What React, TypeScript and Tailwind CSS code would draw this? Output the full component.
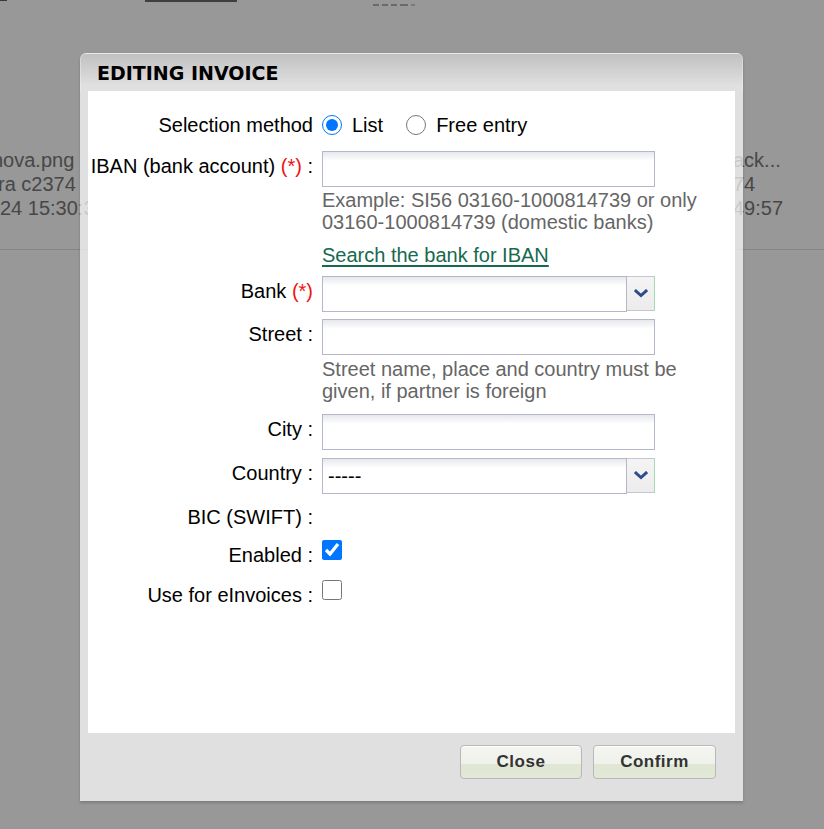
import React from "react";

const inputCls =
  "h-[36px] w-[333px] border border-[#b4b7c9] bg-[linear-gradient(to_bottom,#e6e8ec,#ffffff_9px)]";

function Chevron() {
  return (
    <svg width="14" height="9" viewBox="0 0 14 9">
      <path d="M2 2 L7 6.5 L12 2" fill="none" stroke="#2e4b8c" strokeWidth="3" strokeLinecap="square" />
    </svg>
  );
}

function Select({ value }: { value?: string }) {
  return (
    <div className="flex h-[36px] w-[333px]">
      <div className="flex-1 h-[36px] border border-[#b4b7c9] bg-[linear-gradient(to_bottom,#e6e8ec,#ffffff_9px)] flex items-center pl-[5px] text-[20px] leading-none text-black">
        {value}
      </div>
      <div className="w-[28px] h-[35px] border-t border-b border-r border-t-[#c4c6d0] border-b-[#c4c6d0] border-r-[#a6dbb0] bg-[linear-gradient(to_bottom,#f4f4f4,#ececec)] flex items-center justify-center">
        <Chevron />
      </div>
    </div>
  );
}

export default function App() {
  return (
    <div className="relative w-[824px] h-[829px] overflow-hidden bg-[#989898] font-['Liberation_Sans',Arial,sans-serif]">
      {/* background page */}
      <div className="flex h-[7px] items-start">
        <div className="w-[7px] h-[1px] bg-[#3a3a3a]" />
        <div className="ml-[138px] w-[92px] h-[2px] bg-[#3f3f3f]" />
        <div className="ml-[136px] mt-[4px] flex gap-[3px]">
          <div className="w-[6px] h-[2px] bg-[#6a6a6a]" />
          <div className="w-[6px] h-[2px] bg-[#6a6a6a]" />
          <div className="w-[6px] h-[2px] bg-[#6a6a6a]" />
          <div className="w-[8px] h-[2px] bg-[#6a6a6a]" />
          <div className="w-[4px] h-[2px] bg-[#7a7a7a]" />
        </div>
      </div>
      <div className="flex justify-between pt-[141px] text-[20px] leading-[24px] text-[#474747] whitespace-nowrap">
        <div className="flex flex-col">
          <div className="-ml-[8px]">nova.png</div>
          <div className="-ml-[2px]">ra c2374</div>
          <div>24 15:30:38</div>
        </div>
        <div className="flex flex-col w-[91px]">
          <div>ack...</div>
          <div>74</div>
          <div>49:57</div>
        </div>
      </div>
      <div className="mt-[29px] border-t border-[#858585]" />

      {/* dialog */}
      <div className="absolute left-[80px] top-[53px] w-[663px] h-[748px] flex flex-col rounded-t-[6px] shadow-[0_2px_3px_rgba(0,0,0,0.18)]">
        <div className="h-[38px] shrink-0 rounded-t-[6px] border-t border-l border-r border-white/30 bg-[linear-gradient(to_bottom,rgba(255,255,255,0.4),rgba(255,255,255,0.7)_32px)] flex items-center pl-[16px] pt-[1px]">
          <span className="font-['DejaVu_Sans',sans-serif] font-bold text-[19px] text-black leading-none">
            EDITING INVOICE
          </span>
        </div>
        <div className="flex-1 bg-white/70 px-[8px] flex flex-col">
          <div className="h-[642px] bg-white pt-[20px] text-[20px] text-black flex flex-col">
            {/* Selection method */}
            <div className="flex items-center h-[28px]">
              <div className="w-[225px] text-right leading-[28px]">Selection method</div>
              <div className="ml-[9px] flex items-center">
                <input type="radio" name="sel" defaultChecked className="m-0 w-[20px] h-[20px] accent-[#0075ff]" />
                <span className="ml-[10px] leading-[28px]">List</span>
                <input type="radio" name="sel" className="m-0 ml-[23px] w-[20px] h-[20px]" />
                <span className="ml-[10px] leading-[28px]">Free entry</span>
              </div>
            </div>

            {/* IBAN */}
            <div className="flex items-start mt-[12px]">
              <div className="w-[225px] text-right leading-[31px] whitespace-nowrap">
                IBAN (bank account) <span className="text-[#f01414]">(*)</span> :
              </div>
              <div className={"ml-[9px] " + inputCls} />
            </div>
            <div className="ml-[234px] mt-[2px] w-[390px] text-[#666666] leading-[22px]">
              Example: SI56 03160-1000814739 or only 03160-1000814739 (domestic banks)
            </div>
            <div className="ml-[234px] mt-[11px] leading-[22px]">
              <span className="text-[#17694f] underline underline-offset-[3px]">Search the bank for IBAN</span>
            </div>

            {/* Bank */}
            <div className="flex items-start mt-[10px]">
              <div className="w-[225px] text-right leading-[31px]">
                Bank <span className="text-[#f01414]">(*)</span>
              </div>
              <div className="ml-[9px]">
                <Select />
              </div>
            </div>

            {/* Street */}
            <div className="flex items-start mt-[7px]">
              <div className="w-[225px] text-right leading-[31px]">Street :</div>
              <div className={"ml-[9px] " + inputCls} />
            </div>
            <div className="ml-[234px] mt-[3px] w-[390px] text-[#666666] leading-[22px]">
              Street name, place and country must be given, if partner is foreign
            </div>

            {/* City */}
            <div className="flex items-start mt-[12px]">
              <div className="w-[225px] text-right leading-[31px]">City :</div>
              <div className={"ml-[9px] " + inputCls} />
            </div>

            {/* Country */}
            <div className="flex items-start mt-[8px]">
              <div className="w-[225px] text-right leading-[31px]">Country :</div>
              <div className="ml-[9px]">
                <Select value="-----" />
              </div>
            </div>

            {/* BIC */}
            <div className="flex items-start mt-[9px]">
              <div className="w-[225px] text-right leading-[28px]">BIC (SWIFT) :</div>
            </div>

            {/* Enabled */}
            <div className="flex items-start mt-[10px]">
              <div className="w-[225px] text-right leading-[28px]">Enabled :</div>
              <input type="checkbox" defaultChecked className="ml-[9px] mt-[-1px] w-[20px] h-[20px] accent-[#0075ff]" />
            </div>

            {/* eInvoices */}
            <div className="flex items-start mt-[12px]">
              <div className="w-[225px] text-right leading-[28px]">Use for eInvoices :</div>
              <input type="checkbox" className="ml-[9px] mt-[-1px] w-[20px] h-[20px]" />
            </div>
          </div>

          {/* footer */}
          <div className="flex justify-end gap-[11px] pt-[12px] pr-[19px]">
            <button className="w-[122px] h-[34px] rounded-[4px] border border-[#b8b8b8] bg-[linear-gradient(to_bottom,#f4f5f1_0%,#eff1ea_55%,#dfe6d3_56%,#e2e8d7_100%)] text-[17px] font-bold tracking-[0.5px] text-[#333333] shadow-[inset_0_1px_0_#ffffff]">
              Close
            </button>
            <button className="w-[123px] h-[34px] rounded-[4px] border border-[#b8b8b8] bg-[linear-gradient(to_bottom,#f4f5f1_0%,#eff1ea_55%,#dfe6d3_56%,#e2e8d7_100%)] text-[17px] font-bold tracking-[0.5px] text-[#333333] shadow-[inset_0_1px_0_#ffffff]">
              Confirm
            </button>
          </div>
        </div>
      </div>
    </div>
  );
}
